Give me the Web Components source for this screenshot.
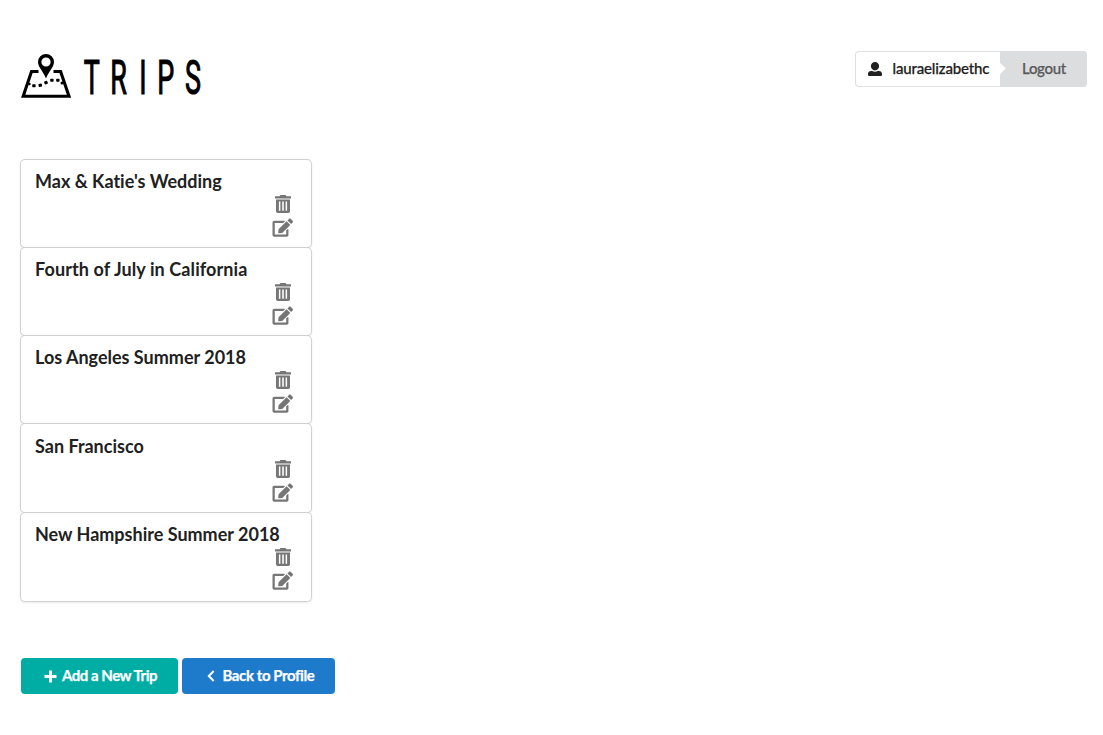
<!DOCTYPE html>
<html lang="en">
<head>
<meta charset="utf-8">
<title>Trips</title>
<style>
html,body{margin:0;background:#fff}
body{font-family:Lato,"Liberation Sans",sans-serif;color:#212121}
</style>
</head>
<body>
<trips-page></trips-page>
<script>
const define = (name, html) => customElements.define(name, class extends HTMLElement {
  constructor() {
    super();
    const t = document.createElement('template');
    t.innerHTML = html;
    this.attachShadow({mode: 'open'}).append(t.content.cloneNode(true));
  }
});

define('trips-logo', `
<style>:host{display:block;width:190px;height:70px}svg{display:block;overflow:visible}text{font-family:Roboto,sans-serif;font-weight:400;font-size:48px;stroke:#000;stroke-width:1.200px}</style>
<svg width="190" height="70" viewBox="20 50 190 70">
  <path d="M38.500 71.500H31.500L23.200 96.300H69L60.600 71.500H53.500" fill="none" stroke="#000" stroke-width="3.100"/>
  <path fill-rule="evenodd" d="M46 54a8 8 0 0 0-8 8c0 5 5 9 8 16.500c3-7.500 8-11.500 8-16.500a8 8 0 0 0-8-8zm0 3.400a4.600 4.600 0 1 1 0 9.200a4.600 4.600 0 0 1 0-9.200z"/>
  <g fill="#000"><circle cx="29.500" cy="84" r="1.200"/><rect x="32.200" y="84.300" width="3.400" height="3" rx=".7"/><rect x="38.500" y="83.800" width="3.400" height="3" rx=".7" transform="rotate(-12 40 85)"/><rect x="44.300" y="81" width="3.300" height="3.200" rx=".7" transform="rotate(-22 46 82.500)"/><rect x="50.200" y="78.700" width="3.400" height="3" rx=".7"/><rect x="56.200" y="78.800" width="3.300" height="3" rx=".7"/><circle cx="62" cy="83" r="1.500"/></g>
  <g transform="scale(.56 1)"><text x="149.500 197 248.800 281 330.500" y="94">TRIPS</text></g>
</svg>`);

define('user-button', `
<style>
:host{display:flex;width:232px;height:36px;font-size:15px;line-height:18px}
.name{box-sizing:border-box;width:145px;display:flex;align-items:center;padding-left:11.500px;border:1px solid #dedfe0;border-right:0;border-radius:4px 0 0 4px;font-weight:500;color:#212121;white-space:nowrap}
.name svg{margin-right:11px;flex:none}
.name span{letter-spacing:-.15px;-webkit-text-stroke:.25px #212121;padding-bottom:2px}
.out{position:relative;box-sizing:border-box;width:87px;display:flex;align-items:center;justify-content:center;padding:0 0 2px 1px;background:#dcddde;border-radius:0 4px 4px 0;color:#5a5a5b;font-weight:500;letter-spacing:-.3px;-webkit-text-stroke:.25px #5a5a5b}
.out::before{content:"";position:absolute;left:-5px;top:13px;width:9px;height:9px;background:#fff;transform:rotate(45deg)}
</style>
<div class="name"><svg width="14" height="14" viewBox="0 0 512 512" preserveAspectRatio="none" fill="#212121"><path d="M256 0c88.366 0 150 66 150 150s-61.634 160-150 160S106 234 106 150 167.634 0 256 0zm183.283 333.821l-71.313-17.828c-74.923 53.890-165.738 41.864-223.940 0l-71.313 17.828C29.981 344.505 0 382.903 0 426.955V464c0 26.510 21.490 48 48 48h416c26.510 0 48-21.490 48-48v-37.045c0-44.052-29.981-82.450-72.717-93.134z"/></svg><span><slot></slot></span></div>
<div class="out">Logout</div>`);

define('trip-card', `
<style>
:host{display:flex;flex-direction:column;box-sizing:border-box;height:87px;padding:10px 18px 0 14px;background:#fff;border-radius:4px;box-shadow:0 1px 3px 0 #d4d4d5,0 0 0 1px #d0d0d1}
:host([tall]){height:88px}
:host([low]){padding-top:11px}
:host([wide]) .t{letter-spacing:.1px}
.t{font-size:18px;line-height:23px;font-weight:700;white-space:nowrap;color:#212121;font-variant-ligatures:none}
.i{display:flex;flex-direction:column;align-items:flex-end;margin-top:2px}
.i svg{display:block;fill:#767676;overflow:visible}
.trash{margin-right:2px}
.edit{margin-top:5px}
</style>
<div class="t"><slot></slot></div>
<div class="i">
<svg class="trash" width="16" height="18" viewBox="0 0 16 18"><path fill-rule="evenodd" d="M0 1.200h4.500L5.500 0h5l1 1.200H16v2.300H0zM1 4.600h14v11.700q0 1.700-1.700 1.700H2.700Q1 18 1 16.300zm2.900 2v9.200h1.500v-9.200zm3.300 0v9.200h1.600v-9.200zm3.400 0v9.200h1.500v-9.200z"/></svg>
<svg class="edit" width="21" height="18" viewBox="0 0 21 18"><path transform="translate(.5 .5) scale(.0356)" d="M402.600 83.200l90.200 90.200c3.800 3.800 3.800 10 0 13.800L274.400 405.600l-92.800 10.300c-12.400 1.400-22.900-9.100-21.500-21.500l10.300-92.800L388.800 83.200c3.800-3.800 10-3.800 13.800 0zm162-22.900l-48.800-48.800c-15.200-15.200-39.900-15.200-55.200 0l-35.400 35.400c-3.800 3.800-3.800 10 0 13.800l90.200 90.200c3.800 3.800 10 3.800 13.800 0l35.400-35.400c15.200-15.300 15.200-40 0-55.200zM384 346.200V448H64V128h229.800c3.200 0 6.200-1.300 8.500-3.500l40-40c7.600-7.600 2.200-20.500-8.500-20.500H48C21.500 64 0 85.500 0 112v352c0 26.500 21.500 48 48 48h352c26.500 0 48-21.500 48-48V306.200c0-10.700-12.900-16-20.500-8.500l-40 40c-2.200 2.300-3.500 5.300-3.500 8.500z"/></svg>
</div>`);

define('action-button', `
<style>
:host{display:flex;align-items:center;box-sizing:border-box;height:36px;border-radius:4px;color:#fff;font-size:15px;line-height:18px;font-weight:700;white-space:nowrap}
.l{display:block;padding-bottom:2px;-webkit-text-stroke:.25px #fff}
</style>
<slot name="icon"></slot><span class="l"><slot></slot></span>`);

define('trips-page', `
<style>
:host{display:block;height:735px;box-sizing:border-box;padding:50px 16px 0 20px}
header{display:flex;justify-content:space-between;height:110px}
user-button{margin-top:1px}
.list{display:grid;gap:1px;width:290px;margin-left:1px}
.actions{display:flex;gap:4px;margin:57px 0 0 1px}
.add{width:157px;padding-left:23px;background:#00ada5;letter-spacing:-.48px}
.back{width:153px;padding-left:24.500px;background:#1e7acb;letter-spacing:-.4px}
.actions svg{display:block;fill:none;stroke:#fff}
.add svg{margin-right:5px}
.back svg{margin-right:8px}
</style>
<header><trips-logo></trips-logo><user-button>lauraelizabethc</user-button></header>
<section class="list">
<trip-card>Max &amp; Katie's Wedding</trip-card>
<trip-card wide>Fourth of July in California</trip-card>
<trip-card>Los Angeles Summer 2018</trip-card>
<trip-card tall low>San Francisco</trip-card>
<trip-card tall>New Hampshire Summer 2018</trip-card>
</section>
<div class="actions">
<action-button class="add"><svg slot="icon" width="13" height="13" viewBox="0 0 13 13" stroke-width="3"><path d="M.5 6.500h12M6.500 .5v12"/></svg>Add a New Trip</action-button>
<action-button class="back"><svg slot="icon" width="8" height="12" viewBox="0 0 8 12" stroke-width="2"><path d="M6.700 1L1.800 6l4.900 5"/></svg>Back to Profile</action-button>
</div>`);
</script>
</body>
</html>
